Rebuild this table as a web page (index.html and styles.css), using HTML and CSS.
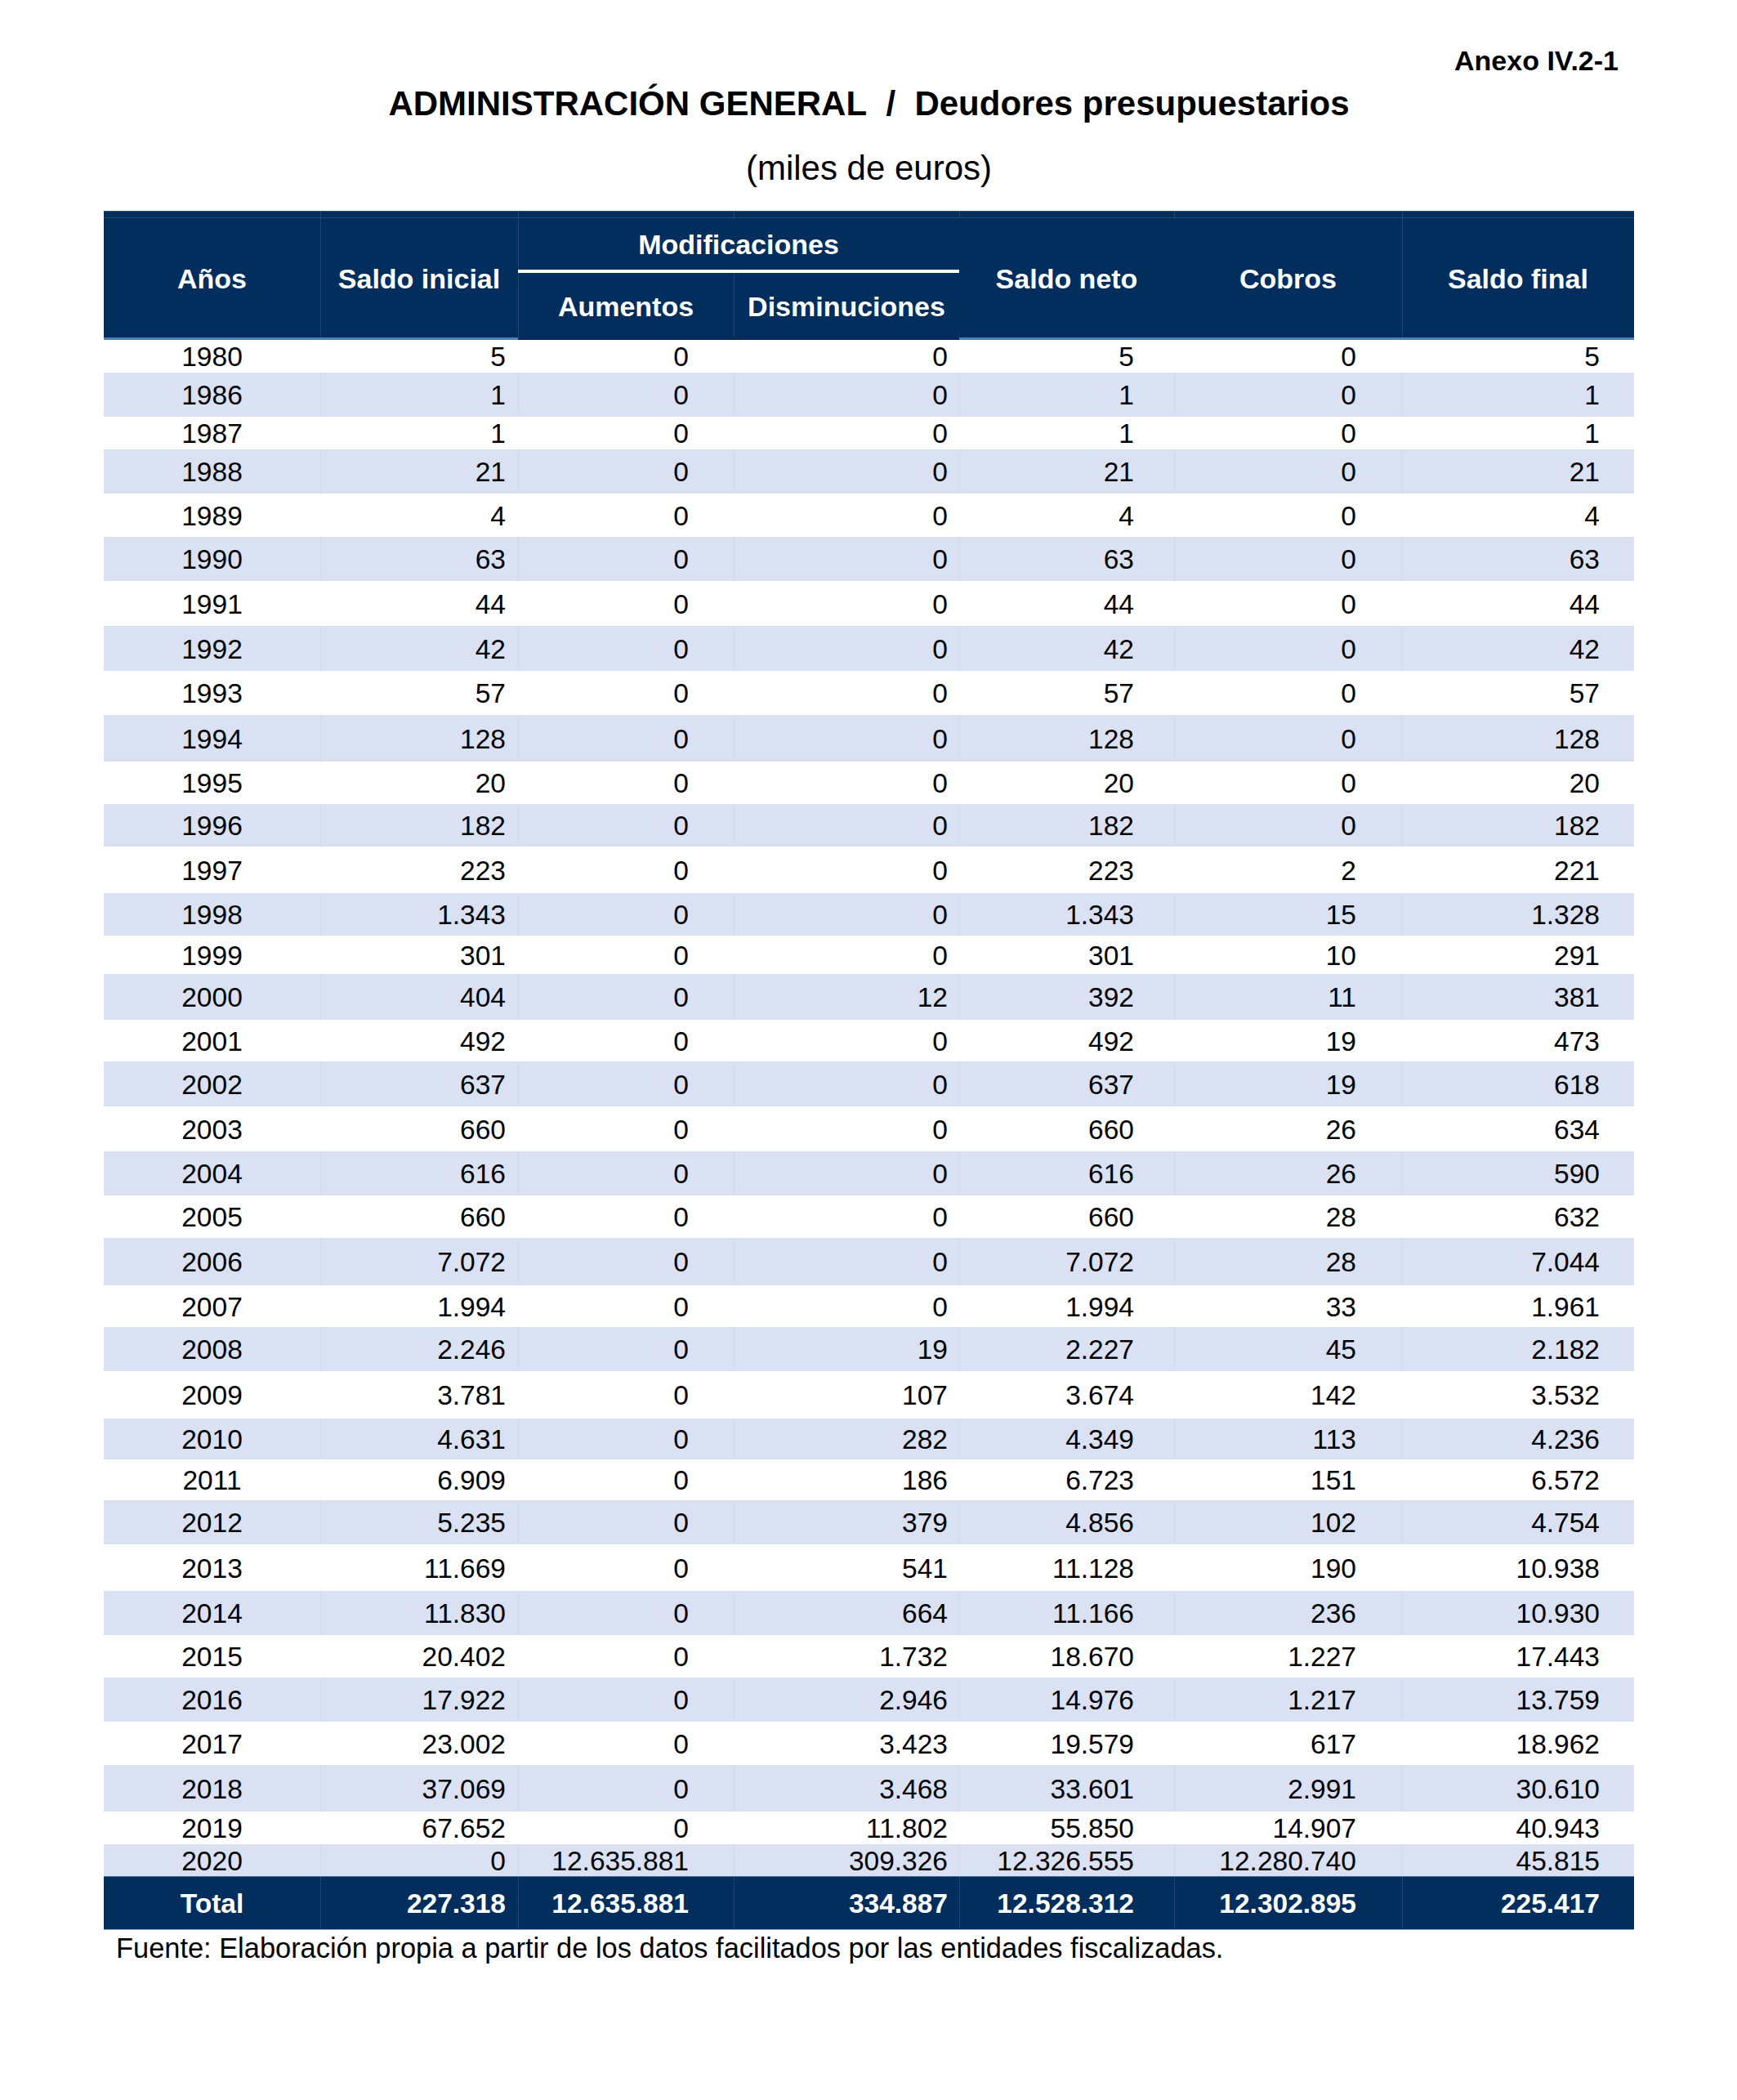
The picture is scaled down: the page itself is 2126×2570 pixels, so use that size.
FILE: index.html
```html
<!DOCTYPE html>
<html lang="es">
<head>
<meta charset="utf-8">
<title>Anexo IV.2-1</title>
<link rel="stylesheet" href="styles.css">
</head>
<body>
<div class="page">
  <p class="anexo">Anexo IV.2-1</p>
  <h1 class="title">ADMINISTRACIÓN GENERAL&nbsp;&nbsp;/&nbsp;&nbsp;Deudores presupuestarios</h1>
  <p class="units">(miles de euros)</p>
  <table class="data">
    <colgroup>
      <col class="c-yr"><col class="c-si"><col class="c-au"><col class="c-di"><col class="c-sn"><col class="c-co"><col class="c-sf">
    </colgroup>
    <thead>
      <tr class="strip"><th></th><th></th><th></th><th></th><th></th><th></th><th></th></tr>
      <tr class="hrow1">
        <th rowspan="2" class="hspan">Años</th>
        <th rowspan="2" class="hspan vl">Saldo inicial</th>
        <th colspan="2" class="hmod vl">Modificaciones</th>
        <th rowspan="2" class="hspan">Saldo neto</th>
        <th rowspan="2" class="hspan">Cobros</th>
        <th rowspan="2" class="hspan vl">Saldo final</th>
      </tr>
      <tr class="hrow2">
        <th class="hsub vl">Aumentos</th>
        <th class="hsub vl">Disminuciones</th>
      </tr>
    </thead>
    <tbody>
      <tr class="h40"><td>1980</td><td>5</td><td>0</td><td>0</td><td>5</td><td>0</td><td>5</td></tr>
      <tr class="h54"><td>1986</td><td>1</td><td>0</td><td>0</td><td>1</td><td>0</td><td>1</td></tr>
      <tr class="h40"><td>1987</td><td>1</td><td>0</td><td>0</td><td>1</td><td>0</td><td>1</td></tr>
      <tr class="h54"><td>1988</td><td>21</td><td>0</td><td>0</td><td>21</td><td>0</td><td>21</td></tr>
      <tr class="h53"><td>1989</td><td>4</td><td>0</td><td>0</td><td>4</td><td>0</td><td>4</td></tr>
      <tr class="h54"><td>1990</td><td>63</td><td>0</td><td>0</td><td>63</td><td>0</td><td>63</td></tr>
      <tr class="h55"><td>1991</td><td>44</td><td>0</td><td>0</td><td>44</td><td>0</td><td>44</td></tr>
      <tr class="h55"><td>1992</td><td>42</td><td>0</td><td>0</td><td>42</td><td>0</td><td>42</td></tr>
      <tr class="h54"><td>1993</td><td>57</td><td>0</td><td>0</td><td>57</td><td>0</td><td>57</td></tr>
      <tr class="h57"><td>1994</td><td>128</td><td>0</td><td>0</td><td>128</td><td>0</td><td>128</td></tr>
      <tr class="h52"><td>1995</td><td>20</td><td>0</td><td>0</td><td>20</td><td>0</td><td>20</td></tr>
      <tr class="h52"><td>1996</td><td>182</td><td>0</td><td>0</td><td>182</td><td>0</td><td>182</td></tr>
      <tr class="h57"><td>1997</td><td>223</td><td>0</td><td>0</td><td>223</td><td>2</td><td>221</td></tr>
      <tr class="h52"><td>1998</td><td>1.343</td><td>0</td><td>0</td><td>1.343</td><td>15</td><td>1.328</td></tr>
      <tr class="h47"><td>1999</td><td>301</td><td>0</td><td>0</td><td>301</td><td>10</td><td>291</td></tr>
      <tr class="h56"><td>2000</td><td>404</td><td>0</td><td>12</td><td>392</td><td>11</td><td>381</td></tr>
      <tr class="h51"><td>2001</td><td>492</td><td>0</td><td>0</td><td>492</td><td>19</td><td>473</td></tr>
      <tr class="h55"><td>2002</td><td>637</td><td>0</td><td>0</td><td>637</td><td>19</td><td>618</td></tr>
      <tr class="h55"><td>2003</td><td>660</td><td>0</td><td>0</td><td>660</td><td>26</td><td>634</td></tr>
      <tr class="h54"><td>2004</td><td>616</td><td>0</td><td>0</td><td>616</td><td>26</td><td>590</td></tr>
      <tr class="h52"><td>2005</td><td>660</td><td>0</td><td>0</td><td>660</td><td>28</td><td>632</td></tr>
      <tr class="h58"><td>2006</td><td>7.072</td><td>0</td><td>0</td><td>7.072</td><td>28</td><td>7.044</td></tr>
      <tr class="h51"><td>2007</td><td>1.994</td><td>0</td><td>0</td><td>1.994</td><td>33</td><td>1.961</td></tr>
      <tr class="h54"><td>2008</td><td>2.246</td><td>0</td><td>19</td><td>2.227</td><td>45</td><td>2.182</td></tr>
      <tr class="h58"><td>2009</td><td>3.781</td><td>0</td><td>107</td><td>3.674</td><td>142</td><td>3.532</td></tr>
      <tr class="h50"><td>2010</td><td>4.631</td><td>0</td><td>282</td><td>4.349</td><td>113</td><td>4.236</td></tr>
      <tr class="h50"><td>2011</td><td>6.909</td><td>0</td><td>186</td><td>6.723</td><td>151</td><td>6.572</td></tr>
      <tr class="h54"><td>2012</td><td>5.235</td><td>0</td><td>379</td><td>4.856</td><td>102</td><td>4.754</td></tr>
      <tr class="h57"><td>2013</td><td>11.669</td><td>0</td><td>541</td><td>11.128</td><td>190</td><td>10.938</td></tr>
      <tr class="h54"><td>2014</td><td>11.830</td><td>0</td><td>664</td><td>11.166</td><td>236</td><td>10.930</td></tr>
      <tr class="h52"><td>2015</td><td>20.402</td><td>0</td><td>1.732</td><td>18.670</td><td>1.227</td><td>17.443</td></tr>
      <tr class="h54"><td>2016</td><td>17.922</td><td>0</td><td>2.946</td><td>14.976</td><td>1.217</td><td>13.759</td></tr>
      <tr class="h53"><td>2017</td><td>23.002</td><td>0</td><td>3.423</td><td>19.579</td><td>617</td><td>18.962</td></tr>
      <tr class="h57"><td>2018</td><td>37.069</td><td>0</td><td>3.468</td><td>33.601</td><td>2.991</td><td>30.610</td></tr>
      <tr class="h40"><td>2019</td><td>67.652</td><td>0</td><td>11.802</td><td>55.850</td><td>14.907</td><td>40.943</td></tr>
      <tr class="h39"><td>2020</td><td>0</td><td>12.635.881</td><td>309.326</td><td>12.326.555</td><td>12.280.740</td><td>45.815</td></tr>
    </tbody>
    <tfoot>
      <tr class="total"><td>Total</td><td>227.318</td><td>12.635.881</td><td>334.887</td><td>12.528.312</td><td>12.302.895</td><td>225.417</td></tr>
    </tfoot>
  </table>
  <p class="source">Fuente: Elaboración propia a partir de los datos facilitados por las entidades fiscalizadas.</p>
</div>
</body>
</html>
```

FILE: styles.css
```css
html, body {
  margin: 0;
  padding: 0;
  background: #ffffff;
}

body {
  font-family: "Liberation Sans", Arial, sans-serif;
  color: #000000;
}

.page {
  width: 1873px;
  margin-left: 127px;
  padding-top: 54px;
  padding-bottom: 120px;
}

.anexo {
  margin: 0;
  padding-right: 19px;
  text-align: right;
  font-size: 34px;
  line-height: 40px;
  font-weight: bold;
}

.title {
  margin: 9px 0 0;
  text-align: center;
  font-size: 42px;
  line-height: 48px;
  font-weight: bold;
}

.units {
  margin: 31px 0 0;
  text-align: center;
  font-size: 42px;
  line-height: 48px;
}

.data {
  margin-top: 28px;
  width: 1873px;
  table-layout: fixed;
  border-collapse: separate;
  border-spacing: 0;
}

.c-yr { width: 265px; }
.c-si { width: 242px; }
.c-au { width: 264px; }
.c-di { width: 276px; }
.c-sn { width: 263px; }
.c-co { width: 279px; }
.c-sf { width: 284px; }

/* header */
.data th {
  background: #012e5d;
  color: #ffffff;
  font-weight: bold;
  font-size: 34px;
  line-height: 40px;
  padding: 0;
  text-align: center;
  vertical-align: middle;
}

.strip th {
  height: 7px;
  line-height: 0;
  font-size: 0;
  border-top: 1px solid #244f7e;
  border-bottom: 1px solid #1f4a78;
}

.strip th + th {
  box-shadow: inset 1px 0 0 #1f4a78;
}

.hspan {
  border-bottom: 3px solid #4f7fba;
}

.hmod {
  height: 63px;
  border-bottom: 4px solid #ffffff;
}

.hsub {
  height: 79px;
  border-bottom: 3px solid #0b2b55;
}

.data th.hspan,
.data th.hsub {
  padding-top: 2px;
}

.data th.hsub {
  height: 77px;
}

.vl {
  box-shadow: inset 1px 0 0 #1a4472;
}

/* body */
.data td {
  padding: 2px 0 0;
  font-size: 33.5px;
  line-height: 36px;
  vertical-align: middle;
  text-align: right;
  white-space: nowrap;
}

.data td:nth-child(1) { text-align: center; }
.data td:nth-child(2) { padding-right: 15px; }
.data td:nth-child(3) { padding-right: 55px; }
.data td:nth-child(4) { padding-right: 14px; }
.data td:nth-child(5) { padding-right: 49px; }
.data td:nth-child(6) { padding-right: 56px; }
.data td:nth-child(7) { padding-right: 42px; }

.data tbody tr:nth-child(even) td {
  background: #d9e1f2;
}

.data tbody tr:nth-child(even) td + td {
  box-shadow: inset 1px 0 0 #d2dbed;
}

.h39 { height: 39px; }
.h40 { height: 40px; }
.h47 { height: 47px; }
.h50 { height: 50px; }
.h51 { height: 51px; }
.h52 { height: 52px; }
.h53 { height: 53px; }
.h54 { height: 54px; }
.h55 { height: 55px; }
.h56 { height: 56px; }
.h57 { height: 57px; }
.h58 { height: 58px; }

.data .total td {
  height: 62px;
  background: #012e5d;
  color: #ffffff;
  font-weight: bold;
  border-top: 1px solid #4c6f98;
  border-bottom: 1px solid #9aabc2;
}

.total td + td {
  box-shadow: inset 1px 0 0 #1a4472;
}

.source {
  margin: 2px 0 0;
  padding-left: 15px;
  font-size: 34.4px;
  line-height: 40px;
}
```
